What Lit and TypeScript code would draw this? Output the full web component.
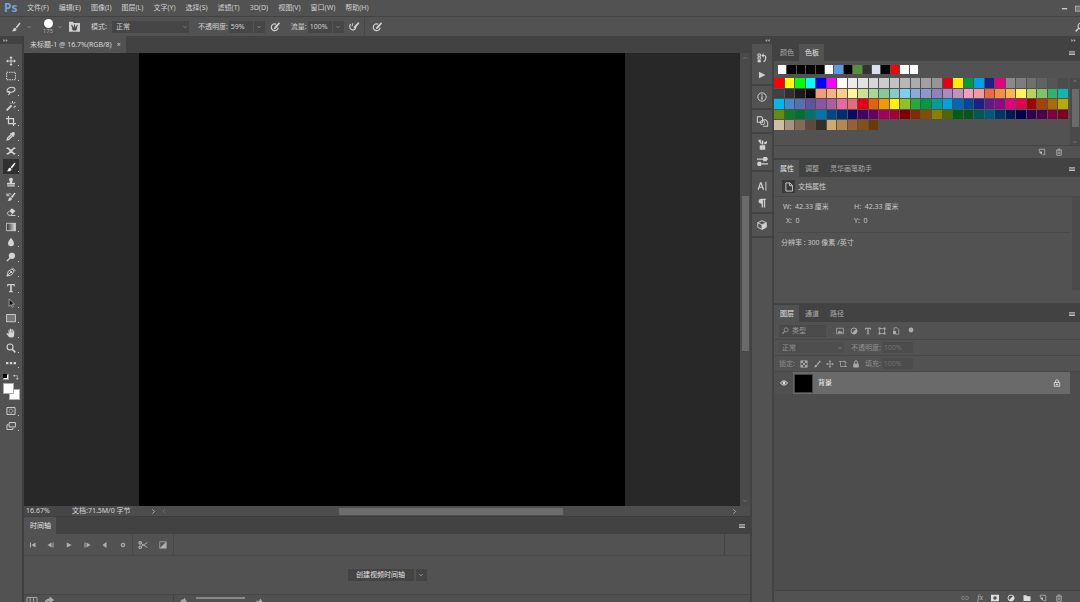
import { LitElement, html, css, svg, type TemplateResult } from "lit";
import { customElement, property } from "lit/decorators.js";
import { classMap } from "lit/directives/class-map.js";
import { styleMap } from "lit/directives/style-map.js";

const line = (d: string) => svg`<path d=${d} fill="none" stroke="currentColor" stroke-width="1.5"/>`;
const fill = (d: string) => svg`<path d=${d} fill="currentColor" fill-rule="evenodd"/>`;

const brushShape = svg`${fill("M14.5 1.3c.8.6.7 1.3.2 2L9.6 10 7.4 8.3l5.5-6.6c.5-.5 1-.7 1.6-.4z")}${fill("M6.6 9.2 8.8 11c.1 2.6-2.6 4.2-7.3 3.6 2-1 1.6-2.4 2.4-3.8.6-1.1 1.7-1.6 2.7-1.6z")}`;

const glyphs: Record<string, TemplateResult | unknown> = {
  move: svg`${line("M8 2v12M2 8h12")}${fill("M8 0l2.6 3.4H5.4zM8 16l2.6-3.4H5.4zM0 8l3.4-2.6v5.2zM16 8l-3.4-2.6v5.2z")}`,
  marquee: svg`<rect x="1" y="2" width="14" height="12" fill="none" stroke="currentColor" stroke-width="1.6" stroke-dasharray="2.4 1.3"/>`,
  lasso: svg`<path d="M5 10.500C2 10 .8 8 2 6 3.500 2.500 9 1 13 3c3.500 2.500 0 6.500-5 7-4 .5-5-.8-4-1.300s3 1.200 2 3-1.500 2-2.500 2.700" fill="none" stroke="currentColor" stroke-width="1.800"/>`,
  wand: svg`<path d="M1 15 9 7" stroke="currentColor" stroke-width="3.200"/>${line("M10.500 0v3.500M13 8.500h3M15 1.500 12 4.500M6.500 2.500l2 2M12 9.500l2 2")}`,
  crop: svg`<path d="M4 0v12h12M0 4h12v12" fill="none" stroke="currentColor" stroke-width="2"/>`,
  dropper: svg`${fill("M9.500 2.500c2.500-3 6.500 1 4 3.700L12.500 7.200l.8.9-1.600 1.600-5.400-5.400 1.600-1.600.900.800z")}<path d="M8 6 2.500 11.500 1.800 14.200l2.700-.7L10 8" fill="none" stroke="currentColor" stroke-width="2"/>`,
  shuffle: svg`<path d="M1 3.500h2.500l9 9H15M1 12.500h2.500l9-9H15" fill="none" stroke="currentColor" stroke-width="2.500"/>${fill("M5.500 6h5v4h-5z")}`,
  brush: brushShape,
  stamp: fill("M8 1c2 0 3.200 1.300 3.200 3S9.600 6.500 9.600 9H13c1 0 1.500.6 1.500 1.500V12h-13v-1.500C1.500 9.600 2 9 3 9h3.400C6.400 6.500 4.800 5.700 4.800 4S6 1 8 1zM2 13.200h12V15H2z"),
  history: svg`${fill("M15.500 2 10 9.500 7.500 8 13.500 1zM7 8.500l2.500 2c-.5 3-3 4.200-7 4 2-.8 1-5 4.500-6z")}${line("M1.500 2v4h4M2 5.500C3.500 2.500 7 2 8.500 4")}`,
  eraser: svg`${fill("M9.500 2 15 6.500 10.500 11 5.200 6.300z")}${line("M5 6.500 1.600 10.200 4.800 13.300h3L10.500 11M8 13.500h7")}`,
  gradient: svg`<defs><linearGradient id="ramp"><stop offset="0" stop-color="#333"/><stop offset="1" stop-color="#ddd"/></linearGradient></defs><rect x="1" y="2" width="14" height="12" fill="url(#ramp)" stroke="currentColor" stroke-width="1.300"/>`,
  drop: fill("M8 1c2 3.500 4.800 5.500 4.800 9a4.800 4.900 0 0 1-9.600 0C3.200 6.500 6 4.500 8 1z"),
  dodge: svg`<circle cx="9.500" cy="6" r="5" fill="currentColor"/><path d="M6.500 9.500 1.500 14.500" stroke="currentColor" stroke-width="2.200"/>`,
  pen: svg`${line("M1.500 14.500 3.500 7 9.500 3 13 6.500 9 12.500zM1.500 14.500 8 8M10 1l5 5")}<circle cx="8" cy="8" r="1.800" fill="currentColor"/>`,
  type: fill("M2 1.500h12v4h-1.300C12.500 3.800 12 3.300 9.300 3.300V12.500c0 .8.500 1 2 1.100v1.100H4.700v-1.100c1.500-.1 2-.3 2-1.100V3.300C4 3.300 3.500 3.800 3.300 5.500H2z"),
  arrow: svg`<path d="M5 1.500v12l3-3 1.800 4.500 2-.9L10 9.800h3.800z" fill="#111" stroke="currentColor" stroke-width="1"/>`,
  rect: svg`<rect x="1" y="2.500" width="14" height="11.500" fill="#777" stroke="currentColor" stroke-width="1.400"/>`,
  hand: fill("M5 14.800 1 9.500C.2 8.300 1.500 7.500 2.500 8.400L4 9.800V3.500c0-1.400 1.700-1.400 1.800 0V7h.6V1.800c0-1.400 1.800-1.400 1.900 0V7h.6V2.500c0-1.400 1.800-1.400 1.800 0v5h.7V4.500c0-1.300 1.700-1.300 1.700 0V10c0 3-1 4.800-2.600 5.200z"),
  zoom: svg`<circle cx="6.500" cy="6.500" r="4.800" fill="none" stroke="currentColor" stroke-width="1.700"/><path d="M10 10l5 5" stroke="currentColor" stroke-width="2.500"/>`,
  loupe: svg`<circle cx="9.500" cy="6.500" r="4.600" fill="none" stroke="currentColor" stroke-width="1.800"/><path d="M6 10l-5 5" stroke="currentColor" stroke-width="2.300"/>`,
  dots: fill("M0 6.200h3.800v3.600H0zM6.100 6.200h3.800v3.600H6.100zM12.200 6.200H16v3.600h-3.800z"),
  mask: svg`${line("M1.500 2.500h13v11h-13z")}<circle cx="8" cy="8" r="3" fill="none" stroke="currentColor" stroke-width="1.400" stroke-dasharray="1.500 1"/>`,
  screens: svg`${line("M5 2.500h10v7H5z")}${line("M4 6H1.500v7.500H11V11")}`,
  chevron: line("M3.500 5.500 8 10l4.500-4.500"),
  brushPanel: svg`${fill("M0 1h5.500L7 3h9v12.500H0z")}<path d="M3.500 6l2.500 3M8 5v4M12.500 6 10 9M5 10h6L10 13H6z" stroke="#4b4b4b" stroke-width="1.500" fill="#4b4b4b"/>`,
  pressure: svg`<path d="M10 3.500A5.500 5.500 0 1 0 13 9" fill="none" stroke="currentColor" stroke-width="1.900"/>${fill("M14.500.5 16.200 2 9.800 10 6 12 7 8z")}`,
  airbrush: svg`<path d="M2.500 3c-3.500 5 0 10.500 5 9.500 3-.6 3.500-3 3-5" fill="none" stroke="currentColor" stroke-width="1.900"/>${fill("M15 0l1.500 2L11 9 7 10.500 8 7z")}${line("M6 2 5 6.500")}`,
  min: fill("M2 7h12v3H2z"),
  play: fill("M2 1.500 15 8 2 14.500z"),
  first: svg`${fill("M2 3h2v10H2zM5 8l8-5v10z")}`,
  prev: fill("M1 8l8-5v10zM11 3h2v10h-2z"),
  next: fill("M15 8 7 3v10zM3 3h2v10H3z"),
  sound: fill("M3 8l8-6v12z"),
  gear: svg`<circle cx="8" cy="8" r="4" fill="none" stroke="currentColor" stroke-width="3"/>${line("M8 1v3M8 12v3M1 8h3M12 8h3M3 3l2 2M11 11l2 2M13 3l-2 2M5 11l-2 2")}`,
  scissors: svg`${line("M5.500 6 15 12M5.500 10 15 4")}<circle cx="3.500" cy="4.500" r="2" fill="none" stroke="currentColor" stroke-width="1.800"/><circle cx="3.500" cy="11.500" r="2" fill="none" stroke="currentColor" stroke-width="1.800"/>`,
  transition: svg`${line("M1.500 1.500h13v13h-13z")}${fill("M14 2v12H2z")}`,
  historyPanel: svg`${line("M1.500 1.500h4v3.500h-4zM1.500 6.200h4v3.500h-4z")}${fill("M1 10.800h5V15H1z")}<path d="M9 4h2.500c3 0 4 7-1 10" fill="none" stroke="currentColor" stroke-width="1.900"/>${fill("M10.500.5v7L6.800 4z")}`,
  info: svg`<circle cx="8" cy="8" r="6.700" fill="none" stroke="currentColor" stroke-width="1.600"/>${fill("M7 3.500h2v2H7zM7 6.800h2v5.500H7z")}`,
  notes: svg`${line("M.5 1h6l1.500 2v6H.5zM9 5.500h3.500l3 3V15H9")}<circle cx="8" cy="9.500" r="3.200" fill="none" stroke="currentColor" stroke-width="1.400"/>`,
  brushes: svg`${fill("M4 9h8v6.500H4zM6.800 2h2.400v6H6.800zM1.500 2l3.500-1.500 1.500 6.500H5zM10 5l4.500-2v3L11 8z")}`,
  sliders: svg`<path d="M0 4.500h16M0 11.500h16" stroke="currentColor" stroke-width="1.700"/>${fill("M9 1.500h6l-1 6H9zM1 8.500h5v6H1z")}`,
  char: svg`${fill("M5 2h2.200l4.300 12H9.300L8.200 10.800H4L2.900 14H.8zM6 4.500 4.600 9h3z")}${fill("M13.500 1H15v14h-1.500z")}`,
  para: fill("M7 1h7v2h-1v12h-2V3h-1.500v12h-2V9C4.500 9 2.500 7.500 2.500 5S4.500 1 7 1z"),
  cube: svg`${line("M8 1 14.800 4.300v7.400L8 15 1.200 11.700V4.300zM1.200 4.300 8 7.800l6.800-3.500M8 7.800v7")}${fill("M8 7.800 14.800 4.300v7.400L8 15z")}`,
  newItem: svg`${line("M2.500 6V2.500h11v11H9")}${fill("M2 7h6v6.500L2 8z")}`,
  trash: line("M2 4.500h12M6 4V2h4v2M3.500 5v9.500h9V5M6.500 7v5M9.500 7v5"),
  menu: fill("M0 3h16v2.500H0zM0 6.800h16v2.500H0zM0 10.600h16V13H0z"),
  doc: line("M3 1.500h6.500L13.500 5.500v9H3zM9 2v4h4"),
  image: svg`${line("M1 2.500h14v11H1z")}${fill("M3 12l3-5 2.500 3 2-2 3 4z")}`,
  adjust: svg`<circle cx="8" cy="8" r="6" fill="none" stroke="currentColor" stroke-width="1.800"/>${fill("M12.500 3.500 3.500 12.500a6.300 6.300 0 0 0 9-9z")}`,
  shape: svg`${line("M3 3h10v10H3z")}${fill("M1 1h4v4H1zM11 1h4v4h-4zM1 11h4v4H1zM11 11h4v4h-4z")}`,
  smart: svg`${line("M4 8V1.500h6L13.500 5v9.500H8")}${fill("M2 8h6v6.500H2z")}`,
  dot: svg`<circle cx="8" cy="8" r="6.500" fill="currentColor"/>`,
  checker: svg`${line("M1.500 1.500h13v13h-13z")}${fill("M2 2h4v4H2zM10 2h4v4h-4zM6 6h4v4H6zM2 10h4v4H2zM10 10h4v4h-4z")}`,
  artboard: line("M0 3h12.500v11M3 3v10H16M10 1l5 5"),
  lock: svg`${fill("M2.500 7h11v8h-11z")}<path d="M5 7V4.500a3 3 0 0 1 6 0V7" fill="none" stroke="currentColor" stroke-width="1.900"/>`,
  lockOpen: svg`${line("M2.500 7h11v7.500h-11zM5 7V4.500a3 3 0 0 1 6 0V7M8 9v3.500M5.500 11h5")}`,
  eye: svg`<path d="M1 8c3.500-5.500 10.500-5.500 14 0-3.500 5.500-10.500 5.500-14 0z" fill="none" stroke="currentColor" stroke-width="1.900"/><circle cx="8" cy="8" r="2.800" fill="currentColor"/>`,
  link: line("M7 5H4a3 3 0 0 0 0 6h3M9 5h3a3 3 0 0 1 0 6H9M5 8h6"),
  maskFill: svg`<path d="M0 1.500h16v13H0zM8 4.500a3.500 3.500 0 1 0 0 7 3.500 3.500 0 0 0 0-7z" fill="currentColor" fill-rule="evenodd"/>`,
  folder: fill("M1 2.500h5.500L8 4.500h7v9.500H1z"),
  frames: line("M0 4h16v8H0zM5 4v8M10.500 4v8"),
  share: fill("M1 14C1 8.500 4 5.500 9 5.500V2l7 6-7 5.500V10C5 9.500 2.500 11 1 14z"),
  hills: fill("M0 13l5-6 2 2 3-5 6 9z"),
  left: line("M10.500 3 5.500 8l5 5"),
  right: line("M5.500 3l5 5-5 5"),
  up: line("M3.500 10.500 8 6l4.500 4.500"),
  collapseL: fill("M7 3v10L1 8zM15 3v10L9 8z"),
  collapseR: fill("M1 3v10l6-5zM9 3v10l6-5z"),
  swap: svg`${line("M4 4.500h7.500V12")}${fill("M0 4.500 5 1v7zM11.500 16 8 11h7z")}`,
};

@customElement("ps-icon")
class PsIcon extends LitElement {
  @property() name = "";
  static styles = css`
    :host { display: inline-flex; flex: none; width: 10px; height: 10px; }
    svg { width: 100%; height: 100%; display: block; overflow: visible; }
  `;
  render() {
    return html`<svg viewBox="0 0 16 16" aria-hidden="true">${glyphs[this.name]}</svg>`;
  }
}

const menus = ["文件(F)", "编辑(E)", "图像(I)", "图层(L)", "文字(Y)", "选择(S)", "滤镜(T)", "3D(D)", "视图(V)", "窗口(W)", "帮助(H)"];

const toolGroups = [
  [["move", "移动"], ["marquee", "矩形选框"], ["lasso", "套索"], ["wand", "魔棒"], ["crop", "裁剪"], ["dropper", "吸管"], ["shuffle", "修复"]],
  [["brush", "画笔"], ["stamp", "仿制图章"], ["history", "历史记录画笔"], ["eraser", "橡皮擦"], ["gradient", "渐变"], ["drop", "模糊"], ["dodge", "减淡"], ["pen", "钢笔"]],
  [["type", "文字"], ["arrow", "路径选择"], ["rect", "矩形"], ["hand", "抓手"], ["zoom", "缩放"], ["dots", "更多"]],
];

const recent = "fff 000 000 000 000 fff 5b9be6 000 56913a 333 dcdff0 000 f00 fff fff".split(" ");
const swatches = (
  "ff0000 ffff00 00ff00 00ffff 0000ff ff00ff ffffff ebebeb e1e1e1 d7d7d7 cccccc c2c2c2 b7b7b7 acacac a0a0a0 959595 e60012 fff100 009944 00a0e9 1d2088 e4007f 8a8a8a 7d7d7d 707070 626262 555555 4c4c4c " +
  "404040 303030 1a1a1a 000000 f29b76 f6b37f facd89 fff799 cce198 acd598 89c997 84ccc9 7ecef4 88abda 8c97cb 8f82bc aa89bd c490bf f19ec2 f29c9f ec6941 f19149 f8b551 fff45c b3d465 80c269 32b16c 13b5b1 " +
  "00b7ee 448aca 556fb5 5f52a0 8957a1 ae5da1 ea68a2 eb6877 e60012 eb6100 f39800 fff100 8fc31f 22ac38 009944 009e96 00a0e9 0068b7 00479d 1d2088 601986 920783 e4007f e5004f a40000 a84200 ac6a00 b7aa00 " +
  "638c0b 097c25 007130 00736d 0075a9 004986 002e73 100964 440062 6a005f a4005b a40035 7d0000 7f2d00 834e00 8a8000 486a00 005e15 005520 005752 005982 003567 001c58 03004c 31004a 500047 7e0043 7d0022 " +
  "d0bea3 a49381 826b57 5c4a3f 362e2b cfa972 b28850 956134 81511c 6a3906"
).split(" ");

@customElement("app-root")
class AppRoot extends LitElement {
  static styles = css`
    :host {
      display: flex; flex-direction: column; height: 100vh; overflow: hidden;
      background: #424242; color: #d0d0d0;
      font: 7px/10px "Noto Sans", "Noto Sans CJK SC", sans-serif;
    }
    * { box-sizing: border-box; }
    button, input, select {
      font: inherit; color: inherit; border: 0; margin: 0; padding: 0;
      background: none; border-radius: 0; appearance: none; outline-offset: -1px;
    }
    button { display: inline-flex; align-items: center; justify-content: center; white-space: nowrap; }
    h2 { font: inherit; margin: 0; }
    .bar { display: flex; align-items: center; flex: none; }
    .grow { flex: 1; min-width: 0; }
    .s11 { width: 11px; height: 11px; }
    .s8 { width: 8px; height: 8px; }
    .s7 { width: 7px; height: 7px; }
    .s6 { width: 6px; height: 6px; }

    .menubar { height: 17px; background: #525252; border-bottom: 1px solid #424242; }
    .logo { width: 23px; padding-left: 4px; font: bold 12px/16px "Open Sans", sans-serif; color: #6ba5d8; }
    .menus { display: flex; gap: 10px; padding-left: 4px; }
    .window { width: 20px; padding-left: 1px; gap: 7px; overflow: hidden; }

    .options { height: 19px; background: #525252; padding-left: 11px; overflow: hidden; white-space: nowrap; }
    .drop { width: 11px; height: 12px; color: #aaa; }
    .preset { margin-left: 2px; }
    .tip { display: flex; flex-direction: column; align-items: center; width: 12px; margin-left: 8px; color: #aaa; font-size: 6px; line-height: 7px; }
    .ball { width: 9px; height: 9px; border-radius: 50%; background: #fff; }
    .kit { margin: 0 11px 0 4px; }
    .press { margin: 0 11px 0 5px; }
    .air { margin: 0 5px; }
    .size { margin-left: 7px; }
    .field { background: #464646; height: 12px; }
    .pick { position: relative; display: flex; align-items: center; }
    .pick select { width: 100%; height: 12px; padding: 0 10px 0 4px; background: #464646; }
    .pick ps-icon { position: absolute; right: 1px; color: #999; pointer-events: none; }
    .mode { width: 77px; margin: 0 9px 0 5px; }
    .num { width: 24px; padding-left: 2px; margin: 0 1px; }
    .rule { width: 1px; align-self: stretch; background: #474747; }
    .search { width: 5px; overflow: hidden; display: flex; }

    .work { flex: 1; min-height: 0; display: flex; }
    .tools { width: 24px; flex: none; background: #525252; border-right: 2px solid #3f3f3f; display: flex; flex-direction: column; }
    .handle { height: 8px; flex: none; background: #424242; display: flex; align-items: center; padding: 0 3px; color: #aaa; }
    .handle ps-icon { width: 5px; height: 5px; }
    .group { display: flex; flex-direction: column; padding: 0 3px 1px; }
    .group.top { padding-top: 9px; }
    .tool { position: relative; height: 15px; width: 100%; color: #d4d4d4; }
    .tool::after { content: ""; position: absolute; right: 0; bottom: 2px; width: 1px; height: 1px; background: #bbb; }
    .tool.on { background: #303030; color: #fff; }
    .mini { display: flex; justify-content: space-around; align-items: center; height: 11px; padding: 0 1px; }
    .pair { display: grid; width: 6px; height: 6px; background: #fff; border: 1px solid #999; }
    .pair::before { content: ""; width: 4px; height: 4px; margin: -1px; background: #000; }
    .chips { position: relative; height: 21px; margin: 0 3px; }
    .chip { position: absolute; width: 11px; height: 11px; background: #fff; border: 1px solid #aaa; }
    .front { left: 0; top: 1px; z-index: 1; }
    .back { left: 6px; top: 7px; }

    .center { flex: 1; min-width: 0; display: flex; flex-direction: column; }
    .tabs { display: flex; height: 17px; flex: none; background: #424242; align-items: stretch; color: #aaa; }
    .tab { padding: 0 5px 0 6px; height: 17px; }
    .tab.on { background: #525252; color: #e4e4e4; }
    .doc-tabs .tab { background: #525252; color: #d8d8d8; gap: 5px; }
    .burger { width: 16px; color: #bbb; }
    .stage { flex: 1; min-height: 0; display: flex; }
    .board { flex: 1; background: #282828; display: flex; justify-content: center; padding: 0 115px; }
    .paper { flex: 1; background: #000; }
    .vscroll { width: 10px; background: #4a4a4a; display: flex; flex-direction: column; align-items: center; justify-content: space-between; color: #888; padding: 2px 0; }
    .vthumb { width: 7px; background: #6a6a6a; }
    .stage .vthumb { height: 155px; margin-bottom: 12px; }
    .status { height: 11px; background: #4d4d4d; border-bottom: 1px solid #3d3d3d; color: #d4d4d4; white-space: nowrap; }
    .zoomv { width: 48px; padding-left: 2px; background: #464646; }
    .info { width: 78px; }
    .back-step { margin: 0 4px; color: #888; }
    .track { flex: 1; display: flex; justify-content: center; }
    .hthumb { width: 40%; max-width: 224px; height: 7px; background: #6c6c6c; }
    .fwd { margin-right: 12px; }

    .timeline { height: 85px; flex: none; display: flex; flex-direction: column; background: #525252; }
    .transport { height: 22px; border-bottom: 1px solid #494949; color: #b0b0b0; }
    .transport button { width: 18px; height: 16px; }
    .transport .wide { width: 20px; }
    .transport .end { width: 26px; align-self: stretch; border-left: 1px solid #424242; }
    .create { flex: 1; display: flex; align-items: center; justify-content: center; gap: 2px; }
    .create button { height: 12px; background: #444; color: #e0e0e0; }
    .create .main { width: 66px; }
    .create .more { width: 11px; }
    .foot { height: 8px; border-top: 1px solid #464646; overflow: hidden; display: flex; align-items: flex-start; color: #aaa; background: #505050; }
    .views { width: 150px; padding-left: 3px; display: flex; gap: 7px; border-right: 1px solid #444; }
    .scale { flex: 1; display: flex; align-items: flex-start; gap: 9px; padding-left: 6px; }
    .scale ps-icon { margin-top: 1px; }
    .slider { width: 49px; height: 2px; margin-top: 2px; background: #888; }

    .dock { width: 24px; flex: none; background: #424242; padding: 0 2px; display: flex; flex-direction: column; }
    .dock .handle { padding: 0 2px; justify-content: flex-end; }
    .dgroup { background: #525252; display: flex; flex-direction: column; align-items: center; border-bottom: 2px solid #434343; color: #d0d0d0; }
    .dgroup button { width: 20px; height: 17px; }
    .dgroup.one button { height: 22px; }
    .dgroup.pad { padding: 5px 0 1px; }
    .dgroup.mid { padding-top: 2px; }
    .dfill { flex: 1; background: #525252; }

    .panels { width: 306px; flex: none; display: flex; flex-direction: column; }
    .panels .handle { justify-content: flex-end; padding: 0 4px; }
    .panel { background: #525252; display: flex; flex-direction: column; margin-bottom: 2px; }
    .recent { display: grid; grid-template-columns: repeat(15, 1fr); gap: 1px; width: 140px; height: 9px; margin: 4px 0 4px 4px; }
    .palette { display: flex; justify-content: space-between; height: 67px; }
    .grid { display: grid; grid-template-columns: repeat(28, 1fr); grid-template-rows: repeat(5, 1fr); gap: 1px; width: 294px; height: 52px; }
    .sw { display: block; min-width: 0; }
    .side { width: 10px; display: flex; flex-direction: column; align-items: center; background: #4a4a4a; color: #999; justify-content: space-between; }
    .side .vthumb { height: 38px; background: #6a6a6a; margin-bottom: 8px; }
    .actions { display: flex; justify-content: flex-end; align-items: center; gap: 9px; height: 13px; border-top: 1px solid #454545; padding-right: 17px; color: #bbb; }
    .doc-head { height: 20px; padding-left: 8px; gap: 3px; border-bottom: 1px solid #494949; }
    .doc-icon { width: 13px; height: 13px; background: #3a3a3a; display: flex; align-items: center; justify-content: center; }
    .pbody { display: flex; height: 106px; }
    .dims { display: grid; grid-template-columns: 71px 1fr; row-gap: 4px; margin: 0 2px 0 4px; padding: 5px 0 6px 5px; border-bottom: 1px solid #494949; height: 36px; }
    .dims span { white-space: pre; color: #c8c8c8; }
    .dims .in { padding-left: 3px; }
    .res { padding: 5px 7px; color: #c8c8c8; }
    .pside { width: 8px; height: 93px; background: #4b4b4b; }

    .layers { flex: 1; min-height: 0; margin: 0; background: #4d4d4d; }
    .lrow { height: 17px; background: #525252; border-bottom: 1px solid #484848; padding-left: 5px; color: #8e8e8e; }
    .lrow.first { height: 18px; }
    .lrow.b { height: 16px; }
    .filter { width: 47px; height: 12px; gap: 3px; padding-left: 2px; background: #4b4b4b; border: 1px solid #484848; color: #999; display: flex; align-items: center; }
    .filter select { flex: 1; min-width: 0; }
    .kinds { display: flex; gap: 6px; padding-left: 10px; color: #aaa; align-items: center; }
    .kinds button:last-child { align-self: flex-start; margin-left: 2px; }
    .blend { width: 65px; margin-right: 7px; }
    .blend select { background: #4e4e4e; height: 11px; padding-left: 3px; }
    .dim { width: 31px; background: #4c4c4c; height: 11px; padding-left: 2px; color: #707070; margin-left: 1px; }
    .locks { display: flex; gap: 5px; padding: 0 5px; color: #aaa; align-items: center; }
    .layer { display: flex; align-items: center; height: 22px; margin-right: 10px; }
    .vis { width: 19px; height: 22px; background: #505050; color: #ddd; }
    .name { flex: 1; height: 22px; background: #6a6a6a; display: flex; align-items: center; gap: 5px; padding: 0 9px 0 1px; color: #eee; }
    .thumb { width: 19px; height: 19px; background: #000; border: 1px solid #444; }
    .layers .actions { height: 12px; gap: 8px; padding-top: 3px; background: #525252; }
    .light { color: #ddd; }
    .off { color: #888; }
    .fx { font: italic 8px/8px "Liberation Serif", serif; }
  `;

  private iconBtn(name: string, label: string, size = "", cls = "") {
    return html`<button class=${cls} aria-label=${label}><ps-icon class=${size} name=${name}></ps-icon></button>`;
  }

  private tabs(names: string[], on: number) {
    return html`<div class="tabs" role="tablist">
      ${names.map((n, i) => html`<button role="tab" aria-selected=${i === on} class=${classMap({ tab: true, on: i === on })}>${n}</button>`)}
      <span class="grow"></span>${this.iconBtn("menu", "面板菜单", "s6", "burger")}
    </div>`;
  }

  private swatch = (c: string) => html`<button class="sw" aria-label="#${c}" style=${styleMap({ background: `#${c}` })}></button>`;

  render() {
    return html`
      <header class="bar menubar">
        <span class="logo">Ps</span>
        <nav class="menus">${menus.map((m) => html`<button>${m}</button>`)}</nav>
        <span class="grow"></span>
        <div class="bar window">${this.iconBtn("min", "最小化", "s7")}${this.iconBtn("rect", "还原", "s7")}</div>
      </header>

      <div class="bar options">
        ${this.iconBtn("brush", "画笔工具")}
        ${this.iconBtn("chevron", "工具预设", "s6", "drop preset")}
        <span class="tip"><span class="ball"></span>175</span>
        ${this.iconBtn("chevron", "画笔预设", "s6", "drop")}
        ${this.iconBtn("brushPanel", "画笔面板", "s11", "kit")}
        <label for="mode">模式:</label>
        <div class="pick mode"><select id="mode"><option>正常</option></select><ps-icon class="s6" name="chevron"></ps-icon></div>
        <label for="opacity">不透明度:</label>
        <input class="field num" id="opacity" value="59%" />
        ${this.iconBtn("chevron", "不透明度滑块", "s6", "drop field")}
        ${this.iconBtn("pressure", "压力控制不透明度", "", "press")}
        <label for="flow">流量:</label>
        <input class="field num" id="flow" value="100%" />
        ${this.iconBtn("chevron", "流量滑块", "s6", "drop field")}
        ${this.iconBtn("airbrush", "喷枪", "", "air")}
        <span class="rule"></span>
        ${this.iconBtn("pressure", "压力控制大小", "", "size")}
        <span class="grow"></span>
        <span class="search"><ps-icon name="loupe"></ps-icon></span>
      </div>

      <div class="work">
        <aside class="tools">
          <div class="handle"><ps-icon name="collapseR"></ps-icon></div>
          ${toolGroups.map((g, i) => html`<div class=${classMap({ group: true, top: i === 0 })}>
            ${g.map(([n, l]) => this.iconBtn(n, l, "", n === "brush" ? "tool on" : "tool"))}
          </div>`)}
          <div class="mini"><span class="pair"></span><ps-icon class="s6" name="swap"></ps-icon></div>
          <div class="chips"><button class="chip front" aria-label="前景色"></button><button class="chip back" aria-label="背景色"></button></div>
          <div class="group">
            ${this.iconBtn("mask", "快速蒙版", "", "tool")}${this.iconBtn("screens", "屏幕模式", "", "tool")}
          </div>
        </aside>

        <main class="center">
          <div class="tabs doc-tabs"><button class="tab">未标题-1 @ 16.7%(RGB/8)<span>×</span></button></div>
          <div class="stage">
            <div class="board"><div class="paper"></div></div>
            <div class="vscroll"><ps-icon class="s6" name="up"></ps-icon><span class="vthumb"></span><ps-icon class="s6" name="chevron"></ps-icon></div>
          </div>
          <div class="bar status">
            <input class="zoomv" aria-label="缩放" value="16.67%" />
            <span class="info">文档:71.5M/0 字节</span>
            <ps-icon class="s7" name="right"></ps-icon><ps-icon class="s6 back-step" name="left"></ps-icon>
            <div class="track"><span class="hthumb"></span></div>
            <ps-icon class="s7 fwd" name="right"></ps-icon>
          </div>
          <section class="timeline">
            ${this.tabs(["时间轴"], 0)}
            <div class="bar transport">
              ${this.iconBtn("first", "第一帧", "s8")}${this.iconBtn("prev", "上一帧", "s8")}${this.iconBtn("play", "播放", "s6")}
              ${this.iconBtn("next", "下一帧", "s8")}${this.iconBtn("sound", "静音", "s8")}${this.iconBtn("gear", "设置", "s6")}
              <span class="rule"></span>
              ${this.iconBtn("scissors", "拆分", "", "wide")}${this.iconBtn("transition", "过渡", "s8", "wide")}
              <span class="rule"></span><span class="grow"></span><span class="end"></span>
            </div>
            <div class="create">
              <button class="main">创建视频时间轴</button>
              ${this.iconBtn("chevron", "更多选项", "s6", "more")}
            </div>
            <div class="foot">
              <div class="views"><ps-icon name="frames"></ps-icon><ps-icon name="share"></ps-icon></div>
              <div class="scale"><ps-icon class="s7" name="hills"></ps-icon><span class="slider"></span><ps-icon name="hills"></ps-icon></div>
            </div>
          </section>
        </main>

        <aside class="dock">
          <div class="handle"><ps-icon name="collapseL"></ps-icon></div>
          <div class="dgroup pad">${this.iconBtn("historyPanel", "历史记录")}${this.iconBtn("play", "动作", "s8")}</div>
          <div class="dgroup one">${this.iconBtn("info", "信息")}</div>
          <div class="dgroup one">${this.iconBtn("notes", "仿制源", "s11")}</div>
          <div class="dgroup mid">${this.iconBtn("brushes", "画笔预设", "s11")}${this.iconBtn("sliders", "画笔", "s11")}</div>
          <div class="dgroup pad">${this.iconBtn("char", "字符")}${this.iconBtn("para", "段落")}</div>
          <div class="dgroup one">${this.iconBtn("cube", "3D")}</div>
          <div class="dfill"></div>
        </aside>

        <aside class="panels">
          <div class="handle"><ps-icon name="collapseR"></ps-icon></div>
          <section class="panel">
            ${this.tabs(["颜色", "色板"], 1)}
            <div class="recent">${recent.map(this.swatch)}</div>
            <div class="palette">
              <div class="grid">${swatches.map(this.swatch)}</div>
              <div class="side"><ps-icon class="s6" name="up"></ps-icon><span class="vthumb"></span><ps-icon class="s6" name="chevron"></ps-icon></div>
            </div>
            <div class="actions">${this.iconBtn("newItem", "新建色板", "s8")}${this.iconBtn("trash", "删除色板", "s8")}</div>
          </section>

          <section class="panel">
            ${this.tabs(["属性", "调整", "灵华画笔助手"], 0)}
            <h2 class="bar doc-head"><span class="doc-icon"><ps-icon name="doc"></ps-icon></span>文档属性</h2>
            <div class="pbody">
              <div class="grow">
                <div class="dims">
                  <span>W:  42.33 厘米</span><span>H:  42.33 厘米</span>
                  <span class="in">X:  0</span><span>Y:  0</span>
                </div>
                <div class="res">分辨率 : 300 像素 /英寸</div>
              </div>
              <div class="pside"></div>
            </div>
          </section>

          <section class="panel layers">
            ${this.tabs(["图层", "通道", "路径"], 0)}
            <div class="bar lrow first">
              <div class="filter"><ps-icon class="s7" name="loupe"></ps-icon><select aria-label="滤镜类型"><option>类型</option></select></div>
              <div class="kinds">
                ${[["image", "像素"], ["adjust", "调整"], ["type", "文字"], ["shape", "形状"], ["smart", "智能对象"]].map(([n, l]) => this.iconBtn(n, l, "s8"))}
                ${this.iconBtn("dot", "启用滤镜", "s6")}
              </div>
            </div>
            <div class="bar lrow b">
              <div class="pick blend"><select aria-label="混合模式"><option>正常</option></select><ps-icon class="s6 off" name="chevron"></ps-icon></div>
              <label for="lop">不透明度:</label><input class="dim" id="lop" value="100%" />
            </div>
            <div class="bar lrow b">
              <span>锁定:</span>
              <div class="locks">
                ${[["checker", "透明像素"], ["brush", "图像像素"], ["move", "位置"], ["artboard", "画板"], ["lock", "全部"]].map(([n, l]) => this.iconBtn(n, l, "s8"))}
              </div>
              <label for="lfill">填充:</label><input class="dim" id="lfill" value="100%" />
            </div>
            <div class="layer">
              ${this.iconBtn("eye", "可见性", "s8", "vis")}
              <div class="name"><span class="thumb"></span><span class="grow">背景</span><ps-icon class="s8" name="lockOpen"></ps-icon></div>
            </div>
            <span class="grow"></span>
            <div class="actions">
              ${this.iconBtn("link", "链接图层", "s8", "off")}
              <button class="fx" aria-label="图层样式">fx</button>
              ${this.iconBtn("maskFill", "添加蒙版", "s8", "light")}${this.iconBtn("adjust", "调整图层", "s8", "light")}
              ${this.iconBtn("folder", "新建组", "s8", "light")}${this.iconBtn("newItem", "新建图层", "s8")}${this.iconBtn("trash", "删除图层", "s8")}
            </div>
          </section>
        </aside>
      </div>
    `;
  }
}
